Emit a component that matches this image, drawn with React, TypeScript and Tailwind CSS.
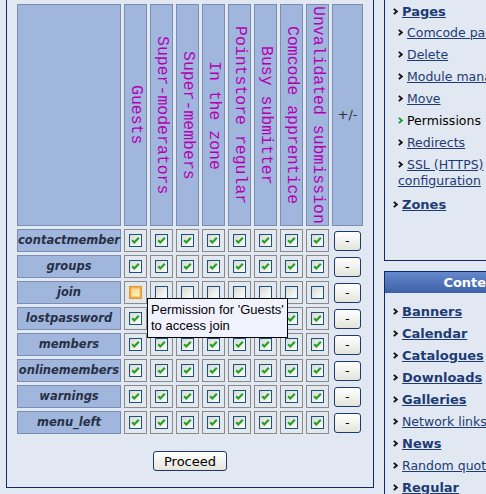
import React from 'react';

const groups = [
  'Guests',
  'Super-moderators',
  'Super-members',
  'In the zone',
  'Pointstore regular',
  'Busy submitter',
  'Comcode apprentice',
  'Unvalidated submission',
];

type CellState = 'on' | 'off' | 'hover';

const rows: { name: string; cells: CellState[] }[] = [
  { name: 'contactmember', cells: Array(8).fill('on') },
  { name: 'groups', cells: Array(8).fill('on') },
  { name: 'join', cells: ['hover', 'off', 'off', 'off', 'off', 'off', 'off', 'off'] },
  { name: 'lostpassword', cells: Array(8).fill('on') },
  { name: 'members', cells: Array(8).fill('on') },
  { name: 'onlinemembers', cells: Array(8).fill('on') },
  { name: 'warnings', cells: Array(8).fill('on') },
  { name: 'menu_left', cells: Array(8).fill('on') },
];

function Checkbox({ state }: { state: CellState }) {
  if (state === 'hover') {
    return (
      <svg width="13" height="13" viewBox="0 0 13 13">
        <defs>
          <linearGradient id="cb-hover" x1="0" y1="0" x2="1" y2="1">
            <stop offset="0" stopColor="#fbd77e" />
            <stop offset="1" stopColor="#fff4d6" />
          </linearGradient>
        </defs>
        <rect x="0.5" y="0.5" width="12" height="12" fill="#f0b048" stroke="#e09a30" />
        <rect x="2.5" y="2.5" width="8" height="8" fill="url(#cb-hover)" />
      </svg>
    );
  }
  return (
    <svg width="13" height="13" viewBox="0 0 13 13">
      <defs>
        <linearGradient id="cb-bg" x1="0" y1="0" x2="1" y2="1">
          <stop offset="0" stopColor="#d8d8d0" />
          <stop offset="1" stopColor="#ffffff" />
        </linearGradient>
      </defs>
      <rect x="0.5" y="0.5" width="12" height="12" fill="url(#cb-bg)" stroke="#1c5180" />
      {state === 'on' && (
        <path d="M3.2 6.2 L5.3 8.4 L9.8 3.8" stroke="#22a022" strokeWidth="2.2" fill="none" />
      )}
    </svg>
  );
}

function Bullet({ green }: { green?: boolean }) {
  return (
    <svg width="5" height="7" viewBox="0 0 5 7" className="inline-block align-[1px] mr-[4px]">
      <path d="M0.8 0.8 L3.8 3.5 L0.8 6.2" stroke={green ? '#169c2a' : '#111'} strokeWidth="1.8" fill="none" />
    </svg>
  );
}

function PermissionsPanel() {
  return (
    <div className="relative ml-[6px] w-[368px] h-[488px] shrink-0 border-x border-b border-[#0f2c6a] px-[10px] pt-[4px] flex flex-col items-center">
      <div className="grid grid-cols-[104px_repeat(8,23px)_31px] grid-rows-[222px_repeat(8,23px)] gap-[3px]">
        <div className="bg-[#a0b6dd] border border-[#7b8db3]" />
        {groups.map((g) => (
          <div key={g} className="bg-[#a0b6dd] border border-[#7b8db3] flex items-center justify-center">
            <span className="[writing-mode:vertical-rl] font-['Liberation_Mono',monospace] text-[16.5px] leading-[20px] text-[#b400b4] whitespace-nowrap">
              {g}
            </span>
          </div>
        ))}
        <div className="bg-[#a0b6dd] border border-[#7b8db3] flex items-center justify-center text-[13px] text-[#333]">
          +/-
        </div>

        {rows.map((row) => (
          <React.Fragment key={row.name}>
            <div className="bg-[#a0b6dd] border border-[#7b8db3] flex items-center justify-center text-[11.5px] font-bold italic text-[#283046] whitespace-nowrap">
              {row.name}
            </div>
            {row.cells.map((c, i) => (
              <div key={i} className="bg-[#e3e8ef] border border-[#8a8a8a] flex items-center justify-center">
                <Checkbox state={c} />
              </div>
            ))}
            <div className="flex items-center justify-center">
              <div className="w-[27px] h-[20px] border border-[#1c3a6e] rounded-[3px] bg-linear-to-b from-white to-[#e4e4dc] flex items-center justify-center text-[12px] leading-none text-black">
                -
              </div>
            </div>
          </React.Fragment>
        ))}
      </div>

      <button className="mt-[17px] w-[74px] h-[20px] border border-[#1c3a6e] rounded-[3px] bg-linear-to-b from-white to-[#e6e4dc] text-[13px] leading-none text-black">
        Proceed
      </button>

      <div className="absolute left-[140px] top-[298px] w-[141px] h-[40px] border border-black bg-[#f2f2ff] px-[3px] pt-[3px] font-['Liberation_Sans',Arial,sans-serif] text-[13px] leading-[16px] text-black">
        Permission for 'Guests'
        <br />
        to access join
      </div>
    </div>
  );
}

const pageLinks = [
  'Comcode pages',
  'Delete',
  'Module management',
  'Move',
  'Permissions',
  'Redirects',
  'SSL (HTTPS) configuration',
];

const contentLinks: { label: string; bold: boolean }[] = [
  { label: 'Banners', bold: true },
  { label: 'Calendar', bold: true },
  { label: 'Catalogues', bold: true },
  { label: 'Downloads', bold: true },
  { label: 'Galleries', bold: true },
  { label: 'Network links', bold: false },
  { label: 'News', bold: true },
  { label: 'Random quotations', bold: false },
  { label: 'Regular', bold: true },
];

function Sidebar() {
  return (
    <div className="ml-[10px] w-[176px] shrink-0 flex flex-col">
      <div className="h-[261px] border-l border-b border-[#0f2c6a] pt-[1px]">
        <div className="pl-[8px] pt-[3px] pb-[2px] leading-[16px] text-[13px] whitespace-nowrap">
          <Bullet />
          <a className="font-bold underline text-[#1d3b74]">Pages</a>
        </div>
        {pageLinks.map((l) => (
          <div key={l} className="pl-[13px] py-[3px] leading-[16px] text-[12.5px]">
            <Bullet green={l === 'Permissions'} />
            {l === 'Permissions' ? (
              <span className="text-black">{l}</span>
            ) : (
              <a className="underline text-[#1d3b74]">{l}</a>
            )}
          </div>
        ))}
        <div className="mt-[2px] pl-[8px] py-[3px] leading-[16px] text-[13px] whitespace-nowrap">
          <Bullet />
          <a className="font-bold underline text-[#1d3b74]">Zones</a>
        </div>
      </div>

      <div className="mt-[10px] border-l border-t border-[#0f2c6a] h-[300px]">
        <div className="h-[21px] bg-linear-to-b from-[#6688cc] to-[#3d60a7] flex items-center justify-center text-white font-bold text-[13px]">
          Content
        </div>
        <div className="pt-[8px]">
          {contentLinks.map((l) => (
            <div key={l.label} className="pl-[8px] py-[3px] leading-[16px] text-[13px] whitespace-nowrap">
              <Bullet />
              <a className={`underline text-[#1d3b74] ${l.bold ? 'font-bold' : 'text-[12.5px]'}`}>{l.label}</a>
            </div>
          ))}
        </div>
      </div>
    </div>
  );
}

export default function App() {
  return (
    <div className="w-[486px] h-[494px] overflow-hidden bg-[#e2e8f1] flex items-start font-['DejaVu_Sans',Verdana,sans-serif]">
      <PermissionsPanel />
      <Sidebar />
    </div>
  );
}
